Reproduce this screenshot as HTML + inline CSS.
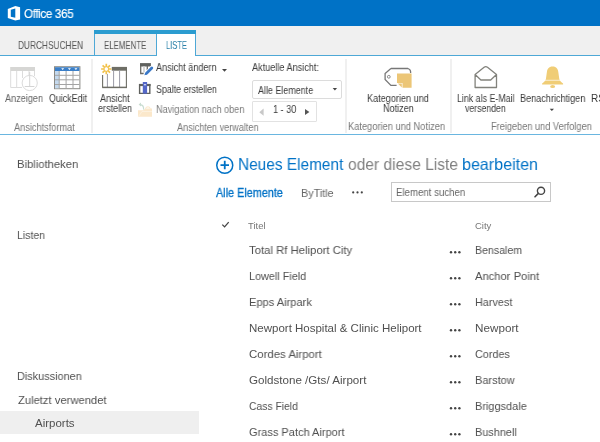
<!DOCTYPE html>
<html><head><meta charset="utf-8"><style>
html,body{margin:0;padding:0;width:600px;height:442px;overflow:hidden;background:#fff;}
body{position:relative;font-family:"Liberation Sans",sans-serif;}
.t{position:absolute;white-space:nowrap;line-height:1;transform-origin:0 0;will-change:transform;}
.r{position:absolute;}
</style></head><body>
<div class="r" style="left:0px;top:0px;width:600px;height:26px;background:#0072c6;"></div>
<div class="t" style="left:24.40px;top:8px;font-size:12.3px;color:#fff;letter-spacing:-0.4px;transform:scaleX(0.9493);-webkit-text-stroke:0.15px #fff;">Office 365</div>
<div class="r" style="left:0px;top:26px;width:600px;height:29px;background:#f0f0f0;"></div>
<div class="r" style="left:0px;top:55px;width:600px;height:1px;background:#4ea8d6;"></div>
<div class="r" style="left:94px;top:30px;width:102px;height:4px;background:#2b9cd0;"></div>
<div class="r" style="left:94px;top:34px;width:1px;height:22px;background:#4ea8d6;"></div>
<div class="r" style="left:156px;top:34px;width:1px;height:22px;background:#4ea8d6;"></div>
<div class="r" style="left:195px;top:34px;width:1px;height:22px;background:#4ea8d6;"></div>
<div class="r" style="left:157px;top:34px;width:38px;height:22px;background:#fff;"></div>
<div class="t" style="left:17.50px;top:40px;font-size:10.5px;color:#555;transform:scaleX(0.7903);">DURCHSUCHEN</div>
<div class="t" style="left:103.60px;top:40px;font-size:10.5px;color:#555;transform:scaleX(0.7491);">ELEMENTE</div>
<div class="t" style="left:165.80px;top:40px;font-size:10.5px;color:#2a80a8;transform:scaleX(0.7158);">LISTE</div>
<div class="r" style="left:0px;top:56px;width:600px;height:78px;background:#fff;"></div>
<div class="r" style="left:0px;top:134px;width:600px;height:1px;background:#6ab6e0;"></div>
<div class="r" style="left:91px;top:59px;width:2px;height:74px;background:#f0f0f0;"></div>
<div class="r" style="left:345px;top:59px;width:2px;height:74px;background:#f0f0f0;"></div>
<div class="r" style="left:450px;top:59px;width:2px;height:74px;background:#f0f0f0;"></div>
<div class="t" style="left:5.00px;top:94px;font-size:10px;color:#636363;transform:scaleX(0.9113);">Anzeigen</div>
<div class="t" style="left:48.50px;top:94px;font-size:10px;color:#3a3a3a;transform:scaleX(0.8879);">QuickEdit</div>
<div class="t" style="left:14.20px;top:123px;font-size:10px;color:#777;transform:scaleX(0.9191);">Ansichtsformat</div>
<div class="t" style="left:100.30px;top:94px;font-size:10px;color:#3a3a3a;transform:scaleX(0.9055);">Ansicht</div>
<div class="t" style="left:98.00px;top:104px;font-size:10px;color:#3a3a3a;transform:scaleX(0.8995);">erstellen</div>
<div class="t" style="left:155.80px;top:63px;font-size:10px;color:#3a3a3a;transform:scaleX(0.9070);">Ansicht ändern</div>
<div class="t" style="left:155.80px;top:85px;font-size:10px;color:#3a3a3a;transform:scaleX(0.8847);">Spalte erstellen</div>
<div class="t" style="left:155.80px;top:105px;font-size:10px;color:#7c7c7c;transform:scaleX(0.9137);">Navigation nach oben</div>
<div class="t" style="left:176.70px;top:123px;font-size:10px;color:#777;transform:scaleX(0.9117);">Ansichten verwalten</div>
<div class="t" style="left:251.90px;top:63px;font-size:10px;color:#3a3a3a;transform:scaleX(0.9128);">Aktuelle Ansicht:</div>
<div class="r" style="left:252px;top:80px;width:90px;height:19px;background:#fff;border:1px solid #dcdcdc;border-radius:2px;box-sizing:border-box;"></div>
<div class="t" style="left:258.30px;top:86px;font-size:10px;color:#3a3a3a;transform:scaleX(0.8930);">Alle Elemente</div>
<div class="r" style="left:252px;top:101px;width:65px;height:21px;background:#fff;border:1px solid #e2e2e2;border-radius:1px;box-sizing:border-box;"></div>
<div class="t" style="left:272.70px;top:105px;font-size:10px;color:#3a3a3a;transform:scaleX(0.9119);">1 - 30</div>
<div class="t" style="left:367.00px;top:94px;font-size:10px;color:#3a3a3a;transform:scaleX(0.9108);">Kategorien und</div>
<div class="t" style="left:382.70px;top:104px;font-size:10px;color:#3a3a3a;transform:scaleX(0.9086);">Notizen</div>
<div class="t" style="left:348.30px;top:122px;font-size:10px;color:#777;transform:scaleX(0.9282);">Kategorien und Notizen</div>
<div class="t" style="left:456.50px;top:94px;font-size:10px;color:#3a3a3a;transform:scaleX(0.8846);">Link als E-Mail</div>
<div class="t" style="left:465.30px;top:104px;font-size:10px;color:#3a3a3a;transform:scaleX(0.8715);">versenden</div>
<div class="t" style="left:520.00px;top:94px;font-size:10px;color:#3a3a3a;transform:scaleX(0.9107);">Benachrichtigen</div>
<div class="t" style="left:590.70px;top:94px;font-size:10px;color:#3a3a3a;">RS</div>
<div class="t" style="left:490.70px;top:122px;font-size:10px;color:#777;transform:scaleX(0.9201);">Freigeben und Verfolgen</div>
<div class="t" style="left:16.80px;top:159px;font-size:11.5px;color:#505050;transform:scaleX(0.9785);">Bibliotheken</div>
<div class="t" style="left:16.80px;top:230px;font-size:11.5px;color:#505050;transform:scaleX(0.9121);">Listen</div>
<div class="t" style="left:16.80px;top:371px;font-size:11.5px;color:#505050;transform:scaleX(0.9474);">Diskussionen</div>
<div class="t" style="left:17.50px;top:395px;font-size:11.5px;color:#505050;transform:scaleX(0.9752);">Zuletzt verwendet</div>
<div class="r" style="left:0px;top:411px;width:199px;height:23px;background:#efefef;"></div>
<div class="t" style="left:35.00px;top:418px;font-size:11.5px;color:#505050;transform:scaleX(0.9899);">Airports</div>
<div class="t" style="left:237.80px;top:156px;font-size:16.5px;color:#0072c6;transform:scaleX(0.9335);">Neues Element</div>
<div class="t" style="left:348.00px;top:156px;font-size:16.5px;color:#808080;transform:scaleX(0.9442);">oder diese Liste</div>
<div class="t" style="left:462.00px;top:156px;font-size:16.5px;color:#0072c6;transform:scaleX(0.9744);">bearbeiten</div>
<div class="t" style="left:216.20px;top:187px;font-size:12px;color:#0072c6;transform:scaleX(0.9034);-webkit-text-stroke:0.3px #0072c6;">Alle Elemente</div>
<div class="t" style="left:301.20px;top:188px;font-size:11.5px;color:#666;transform:scaleX(0.9395);">ByTitle</div>
<div class="r" style="left:391px;top:182px;width:160px;height:20px;background:#fff;border:1px solid #c8c8c8;box-sizing:border-box;"></div>
<div class="t" style="left:396.00px;top:187px;font-size:10.5px;color:#666;transform:scaleX(0.9203);">Element suchen</div>
<div class="t" style="left:248.30px;top:221px;font-size:9.5px;color:#777;transform:scaleX(0.9886);">Titel</div>
<div class="t" style="left:475.00px;top:221px;font-size:9.5px;color:#777;transform:scaleX(0.9786);">City</div>
<div class="t" style="left:249.30px;top:245px;font-size:11.5px;color:#505050;transform:scaleX(0.9847);">Total Rf Heliport City</div>
<div class="t" style="left:474.90px;top:245px;font-size:11.5px;color:#505050;transform:scaleX(0.9208);">Bensalem</div>
<div class="t" style="left:249.30px;top:271px;font-size:11.5px;color:#505050;transform:scaleX(0.9423);">Lowell Field</div>
<div class="t" style="left:474.90px;top:271px;font-size:11.5px;color:#505050;transform:scaleX(0.9734);">Anchor Point</div>
<div class="t" style="left:249.30px;top:297px;font-size:11.5px;color:#505050;transform:scaleX(0.9640);">Epps Airpark</div>
<div class="t" style="left:474.90px;top:297px;font-size:11.5px;color:#505050;transform:scaleX(0.9419);">Harvest</div>
<div class="t" style="left:249.30px;top:323px;font-size:11.5px;color:#505050;transform:scaleX(0.9986);">Newport Hospital &amp; Clinic Heliport</div>
<div class="t" style="left:474.90px;top:323px;font-size:11.5px;color:#505050;transform:scaleX(1.0164);">Newport</div>
<div class="t" style="left:249.30px;top:349px;font-size:11.5px;color:#505050;transform:scaleX(0.9905);">Cordes Airport</div>
<div class="t" style="left:474.90px;top:349px;font-size:11.5px;color:#505050;transform:scaleX(0.9420);">Cordes</div>
<div class="t" style="left:249.30px;top:375px;font-size:11.5px;color:#505050;transform:scaleX(1.0090);">Goldstone /Gts/ Airport</div>
<div class="t" style="left:474.90px;top:375px;font-size:11.5px;color:#505050;transform:scaleX(0.9543);">Barstow</div>
<div class="t" style="left:249.30px;top:401px;font-size:11.5px;color:#505050;transform:scaleX(0.8987);">Cass Field</div>
<div class="t" style="left:474.90px;top:401px;font-size:11.5px;color:#505050;transform:scaleX(0.9531);">Briggsdale</div>
<div class="t" style="left:249.30px;top:427px;font-size:11.5px;color:#505050;transform:scaleX(0.9579);">Grass Patch Airport</div>
<div class="t" style="left:474.90px;top:427px;font-size:11.5px;color:#505050;transform:scaleX(0.9478);">Bushnell</div>
<svg class="r" style="left:0;top:0" width="600" height="442" viewBox="0 0 600 442">
<!-- office logo -->
<path d="M7.8 8.9 L15.3 5.9 L20.1 7.3 L20.1 19.5 L15.3 20.6 L7.8 17.9 Z M10.8 9.8 L15.3 8.4 L15.3 17.8 L10.8 16.8 Z" fill="#fff" fill-rule="evenodd"/>
<!-- Anzeigen (disabled) -->
<g fill="none" stroke="#dcdcdc" stroke-width="1">
<path d="M10.7 71 V87.5 H22 M16.7 71 V87.5 M22.5 71 V78 M29 71 V75 M34.5 71 V76"/>
</g>
<rect x="10.2" y="67" width="24.8" height="4" fill="#d6d6d4"/>
<circle cx="29.7" cy="83" r="7.6" fill="#fff" stroke="#dadada" stroke-width="1"/>
<path d="M29.7 72 V86.3 M24.7 86.5 H34.4" stroke="#d4d4d4" stroke-width="1" fill="none"/>
<!-- QuickEdit -->
<rect x="54.5" y="66.7" width="25.4" height="22" fill="#fff" stroke="#8a8a86" stroke-width="1"/>
<rect x="55" y="67.2" width="24.4" height="3.8" fill="#3b7fc8"/>
<rect x="55" y="71" width="4.2" height="17.3" fill="#c4d9ee"/>
<path d="M59.2 71 V88.5 M66.1 71 V88.5 M73 71 V88.5 M55 75.3 H79.5 M55 79.8 H79.5 M55 84.5 H79.5" stroke="#a4a4a4" stroke-width="1" fill="none"/>
<path d="M61.2 68.2 H64.2 L62.7 70 Z M67.9 68.2 H70.9 L69.4 70 Z M74.4 68.2 H77.4 L75.9 70 Z" fill="#fff"/>
<!-- Ansicht erstellen -->
<rect x="111.8" y="66.9" width="15.1" height="3.8" fill="#6e6e66"/>
<path d="M102.6 75 V87.4 M126.4 67 V87.4" stroke="#6e6e66" stroke-width="1.1" fill="none"/>
<path d="M107.4 74 V87 M113.6 70.5 V87 M119.6 70.5 V87" stroke="#9a9aa6" stroke-width="1" fill="none"/>
<path d="M102.2 87.4 H127" stroke="#6e6e66" stroke-width="1.5" fill="none"/>
<g stroke="#f2c24c" stroke-width="1.7" stroke-linecap="butt">
<path d="M106.3 63.8 V74.2 M101.1 69 H111.5 M102.6 65.3 L110 72.7 M110 65.3 L102.6 72.7"/>
</g>
<circle cx="106.3" cy="69" r="2.3" fill="#fff"/>
<circle cx="106.3" cy="69" r="2.3" fill="none" stroke="#f2c24c" stroke-width="1"/>
<!-- Ansicht aendern -->
<rect x="140" y="63.1" width="10.9" height="3.4" fill="#5f615e"/>
<path d="M140.7 66 V73.5 H146 M147.3 66 V70" stroke="#6a6a66" stroke-width="1.3" fill="none"/>
<rect x="143" y="66.5" width="2" height="6.5" fill="#d8d8d8"/>
<path d="M145.6 74.2 L152 67.8" stroke="#fff" stroke-width="4.4" stroke-linecap="round"/>
<path d="M146.6 73.2 L151.8 68" stroke="#3a78c8" stroke-width="2.8" stroke-linecap="round"/>
<path d="M144.4 75.2 L145.2 72.4 L147.2 74.4 Z" fill="#3a78c8"/>
<!-- Spalte erstellen -->
<path d="M139.6 84.6 V93.4 H149.8 V84.6 Z" fill="#fff" stroke="#5f615e" stroke-width="1.4"/>
<rect x="139" y="83.9" width="11.5" height="2.2" fill="#5f615e"/>
<rect x="142.8" y="82" width="4.3" height="11.6" fill="#5568c8"/>
<path d="M143.6 84.3 H146.3 L145 85.8 Z" fill="#fff"/>
<!-- Navigation nach oben (disabled) -->
<path d="M138 110.2 H143.5 L145.2 108.6 C145.8 105.8 149.8 105.2 150.6 108.6 H152 V116.8 H138 Z" fill="#fbe8cb"/>
<path d="M146 108.8 C146.6 107 149.2 106.8 149.8 108.8 Z" fill="#fff" opacity="0.7"/>
<path d="M138.4 116.6 L142 111.5 H152" stroke="#fdf3e3" stroke-width="0.8" fill="none"/>
<path d="M143.6 109.6 C143.8 106.8 142.5 104.8 140.2 104.6" stroke="#c9ddd1" stroke-width="1.2" fill="none"/>
<path d="M138.6 104.5 L141 102.6 V106.6 Z" fill="#c9ddd1"/>
<!-- dropdown arrows -->
<path d="M222 69 H227 L224.5 71.8 Z" fill="#444"/>
<path d="M332.7 88 H337.1 L334.9 90.6 Z" fill="#444"/>
<path d="M549.7 108.8 H554 L551.85 111.1 Z" fill="#444"/>
<path d="M263.6 108.6 V115.7 L259.3 112.15 Z" fill="#c8c8c8"/>
<path d="M305 109 V115 L309.4 112 Z" fill="#555"/>
<!-- tag -->
<path d="M390.9 68.5 H407.9 Q410.6 69.5 410.6 71.8 V73 M396.6 85.4 H390.9 L385.1 79.5 V73.6 L390.9 68.5" stroke="#777" stroke-width="1.3" fill="none"/>
<circle cx="388.8" cy="76.8" r="1.4" fill="none" stroke="#888" stroke-width="1"/>
<path d="M397 73.4 H411.6 V87.8 H402.5 V82.9 H397 Z" fill="#ecc677"/>
<path d="M397.8 83.6 H401.8 V87.6 Z" fill="#ecc677"/>
<!-- envelope -->
<path d="M475.1 74.6 V87.5 H496.5 V74.6 L487.5 67.2 Q485.8 66 484.1 67.2 Z M475.1 74.6 L480.9 80 H490.7 L496.5 74.6" stroke="#82827c" stroke-width="1.3" fill="none" stroke-linejoin="round"/>
<!-- bell -->
<path d="M552.6 66.4 C556.5 66.4 558 69 558.3 72 L559.3 79 C559.8 81 562 82.5 563.1 83.5 L563.1 84.4 H542.1 V83.5 C543.2 82.5 545.4 81 545.9 79 L546.9 72 C547.2 69 548.7 66.4 552.6 66.4 Z" fill="#f0cd76"/>
<rect x="545" y="79.8" width="15.2" height="0.9" fill="#fff" opacity="0.75"/>
<ellipse cx="552.6" cy="86.4" rx="2.5" ry="1.5" fill="#f0cd76"/>
<!-- plus circle -->
<circle cx="224.75" cy="165.25" r="8" fill="none" stroke="#0072c6" stroke-width="1.5"/>
<path d="M220.5 165.1 H229 M224.75 160.8 V169.3" stroke="#0072c6" stroke-width="1.8" fill="none"/>
<!-- header dots --><circle cx="451.00" cy="252.20" r="1.2" fill="#444"/><circle cx="455.20" cy="252.20" r="1.2" fill="#444"/><circle cx="459.40" cy="252.20" r="1.2" fill="#444"/><circle cx="451.00" cy="278.20" r="1.2" fill="#444"/><circle cx="455.20" cy="278.20" r="1.2" fill="#444"/><circle cx="459.40" cy="278.20" r="1.2" fill="#444"/><circle cx="451.00" cy="304.20" r="1.2" fill="#444"/><circle cx="455.20" cy="304.20" r="1.2" fill="#444"/><circle cx="459.40" cy="304.20" r="1.2" fill="#444"/><circle cx="451.00" cy="330.20" r="1.2" fill="#444"/><circle cx="455.20" cy="330.20" r="1.2" fill="#444"/><circle cx="459.40" cy="330.20" r="1.2" fill="#444"/><circle cx="451.00" cy="356.20" r="1.2" fill="#444"/><circle cx="455.20" cy="356.20" r="1.2" fill="#444"/><circle cx="459.40" cy="356.20" r="1.2" fill="#444"/><circle cx="451.00" cy="382.20" r="1.2" fill="#444"/><circle cx="455.20" cy="382.20" r="1.2" fill="#444"/><circle cx="459.40" cy="382.20" r="1.2" fill="#444"/><circle cx="451.00" cy="408.20" r="1.2" fill="#444"/><circle cx="455.20" cy="408.20" r="1.2" fill="#444"/><circle cx="459.40" cy="408.20" r="1.2" fill="#444"/><circle cx="451.00" cy="434.20" r="1.2" fill="#444"/><circle cx="455.20" cy="434.20" r="1.2" fill="#444"/><circle cx="459.40" cy="434.20" r="1.2" fill="#444"/>
<circle cx="353.2" cy="192.4" r="1.1" fill="#444"/><circle cx="357.5" cy="192.4" r="1.1" fill="#444"/><circle cx="361.8" cy="192.4" r="1.1" fill="#444"/>
<!-- search icon -->
<circle cx="541" cy="190.8" r="3.6" fill="none" stroke="#444" stroke-width="1.4"/>
<path d="M538.4 193.4 L535 196.8" stroke="#444" stroke-width="1.6" stroke-linecap="round"/>
<!-- checkmark -->
<path d="M222.3 224.6 L224.6 226.9 L228.7 222.1" stroke="#444" stroke-width="1.3" fill="none"/>
</svg>
</body></html>
